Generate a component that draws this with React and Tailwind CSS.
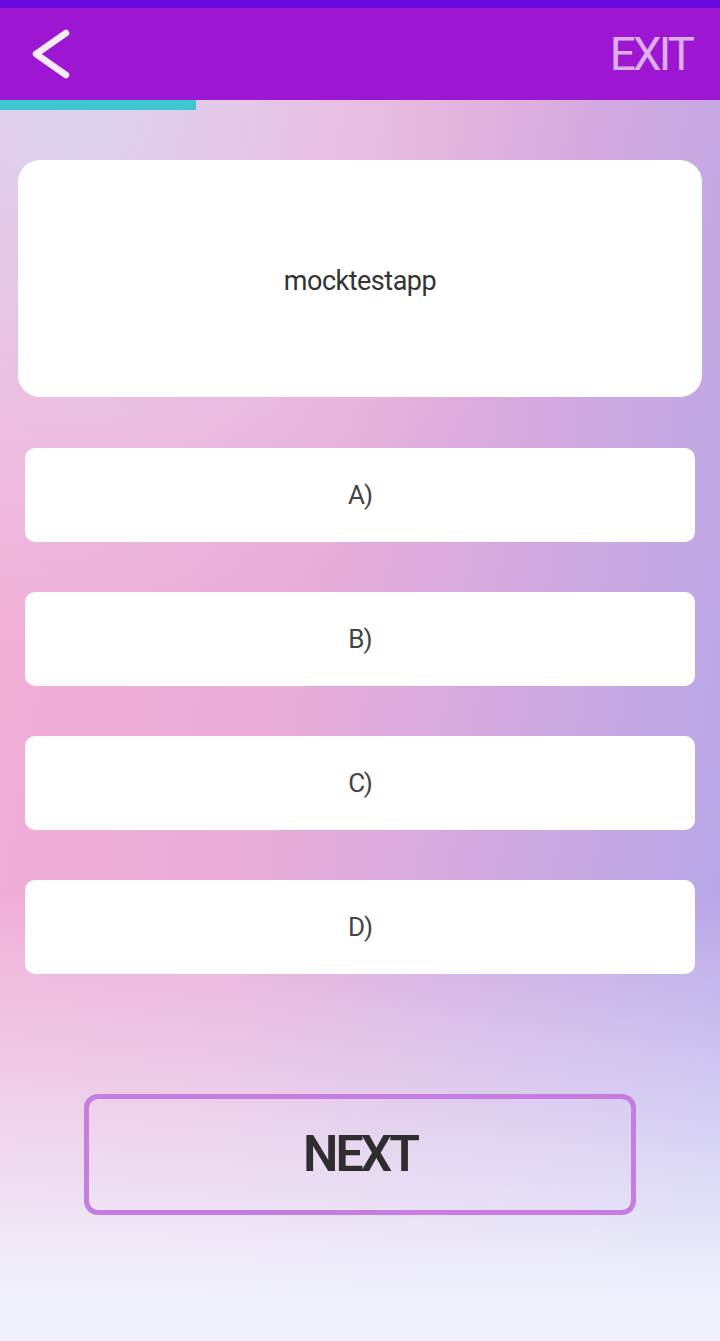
import React from 'react';

const options = ['A)', 'B)', 'C)', 'D)'];

const App = () => {
  return (
    <div
      className="w-[720px] h-[1341px] flex flex-col overflow-hidden"
      style={{ fontFamily: 'Roboto, "Liberation Sans", sans-serif' }}
    >
      {/* header */}
      <div className="h-[8px] bg-[#6a0ae0]" />
      <div className="h-[92px] bg-[#9d17d3] flex items-center justify-between pl-[26px] pr-[28px]">
        <svg width="48" height="52" viewBox="0 0 48 52" fill="none">
          <path d="M40 5 L10 26 L40 47" stroke="#f4ecfb" strokeWidth="6.5" strokeLinecap="round" strokeLinejoin="round" />
        </svg>
        <span className="text-[46px] text-[#dcaeea] tracking-[-3px] leading-none">EXIT</span>
      </div>

      <div className="flex-1 flex flex-col bg-[linear-gradient(180deg,rgba(240,242,252,0)_0%,rgba(240,242,252,0)_64%,rgba(240,242,252,1)_97%),radial-gradient(ellipse_70%_45%_at_10%_0%,rgba(220,212,238,1)_0%,rgba(228,206,234,0.6)_50%,rgba(228,206,234,0)_100%),linear-gradient(100deg,#f5b0d6_0%,#e8acd8_42%,#b0a6ea_100%)]">
        {/* progress */}
        <div className="h-[10px] w-[196px] bg-[#3fc6cf]" />

        <div className="flex flex-col px-[18px] pt-[50px]">
          <div className="h-[237px] bg-white rounded-[22px] flex items-center justify-center pt-[6px]">
            <span className="text-[27px] text-[#333] tracking-[-0.5px]">mocktestapp</span>
          </div>

          <div className="flex flex-col gap-[50px] px-[7px] mt-[51px]">
            {options.map((o) => (
              <div key={o} className="h-[94px] bg-white rounded-[10px] flex items-center justify-center">
                <span className="text-[26px] text-[#444] tracking-[-1px]">{o}</span>
              </div>
            ))}
          </div>

          <div className="flex justify-center mt-[120px]">
            <button className="w-[552px] h-[121px] border-[5px] border-[#c57ddf] rounded-[14px] flex items-center justify-center">
              <span className="text-[50px] font-semibold text-[#2e2e2e] tracking-[-3px]">NEXT</span>
            </button>
          </div>
        </div>
      </div>
    </div>
  );
};

export default App;
